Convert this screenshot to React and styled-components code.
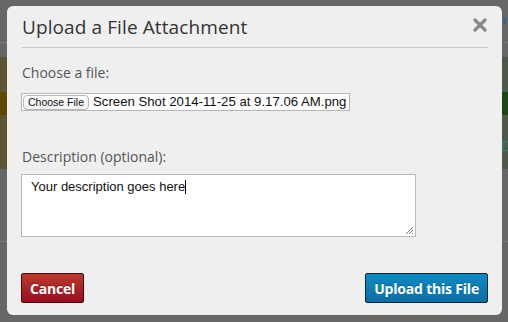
import React from 'react';
import styled, { createGlobalStyle } from 'styled-components';

const GlobalStyle = createGlobalStyle`
	html, body {
		margin: 0;
		padding: 0;
		background: #666;
		overflow: hidden;
	}
`;

const Backdrop = styled.div`
	position: relative;
	width: 508px;
	height: 322px;
	overflow: hidden;
	display: flex;
	flex-direction: column;
	background: #666;
	font-family: 'Open Sans', 'Liberation Sans', sans-serif;
`;

const Band = styled.div`
	position: relative;
	height: ${(p) => p.h}px;
	background: linear-gradient(to right, ${(p) => p.left} 50%, ${(p) => p.right} 50%);
	border-bottom: ${(p) => (p.line ? '1px solid #7a7a7a' : 'none')};
`;

const PeekText = styled.span`
	position: absolute;
	left: 502px;
	top: ${(p) => p.top}px;
	font-family: 'Open Sans', sans-serif;
	font-size: 14px;
	line-height: 14px;
	color: ${(p) => p.color};
	text-decoration: ${(p) => (p.underline ? 'underline' : 'none')};
`;

const Modal = styled.div`
	position: absolute;
	left: 7px;
	top: 6px;
	width: 495px;
	height: 309px;
	box-sizing: border-box;
	background: #efefef;
	border-radius: 6px;
	padding: 0 14px 0 15px;
	display: flex;
	flex-direction: column;
`;

const Header = styled.div`
	height: 41px;
	display: flex;
	align-items: center;
	justify-content: space-between;
	border-bottom: 1px solid #c9c9c9;
`;

const Title = styled.h3`
	margin: 0;
	padding-top: 1px;
	font-size: 19px;
	font-weight: 400;
	color: #333;
	letter-spacing: 0.1px;
`;

const Close = styled.svg`
	display: block;
	margin-right: 1px;
	margin-top: -3px;
`;

const Body = styled.div`
	flex: 1;
	display: flex;
	flex-direction: column;
	padding-top: 16px;
`;

const Label = styled.label`
	font-size: 14px;
	line-height: 18px;
	color: #555;
	margin-bottom: ${(p) => p.gap}px;
`;

const FileField = styled.div`
	width: 329px;
	height: 18px;
	box-sizing: border-box;
	margin-left: -1px;
	border: 1px solid #b5b5b5;
	background: #fff;
	display: flex;
	align-items: center;
	font-family: 'Liberation Sans', Arial, sans-serif;
	margin-bottom: 37px;
	white-space: nowrap;
	overflow: hidden;
`;

const FileButton = styled.span`
	flex-shrink: 0;
	height: 15px;
	margin-left: 1px;
	padding: 0 4px;
	box-sizing: border-box;
	border: 1px solid #b8b8b8;
	border-radius: 4px;
	background: linear-gradient(#fff, #f1f1f1);
	font-size: 10.5px;
	line-height: 13px;
	color: #111;
`;

const FileName = styled.span`
	margin-left: 4px;
	font-size: 13.2px;
	line-height: 16px;
	color: #111;
`;

const TextBox = styled.div`
	position: relative;
	width: 395px;
	height: 63px;
	box-sizing: border-box;
	margin-left: -1px;
	border: 1px solid #b8b8b8;
	background: #fff;
	padding: 4px 9px;
	font-family: 'Liberation Sans', Arial, sans-serif;
	font-size: 13px;
	line-height: 15px;
	color: #111;
`;

const Caret = styled.span`
	display: inline-block;
	width: 1px;
	height: 14px;
	background: #000;
	vertical-align: -3px;
`;

const Grip = styled.svg`
	position: absolute;
	right: 1px;
	bottom: 1px;
`;

const Footer = styled.div`
	display: flex;
	justify-content: space-between;
	align-items: center;
	height: 30px;
	margin-bottom: 12px;
	margin-left: -1px;
`;

const Button = styled.button`
	height: 30px;
	box-sizing: border-box;
	padding: 0 ${(p) => p.pad}px;
	border: 1px solid ${(p) => p.border};
	border-radius: 2px;
	background: linear-gradient(${(p) => p.top}, ${(p) => p.bottom});
	color: #fff;
	font-family: 'Open Sans', 'Liberation Sans', sans-serif;
	font-size: 14px;
	font-weight: 700;
	letter-spacing: -0.2px;
	text-shadow: 0 -1px 0 rgba(0, 0, 0, 0.25);
	cursor: pointer;
`;

export default function App() {
	return (
		<>
			<GlobalStyle />
			<Backdrop>
				<Band h={42} left="#666" right="#666" line>
					<PeekText top={14} color="#2c6488">n</PeekText>
				</Band>
				<Band h={14} left="#666" right="#666" />
				<Band h={35} left="#5f5535" right="#4d5a4a" />
				<Band h={23} left="#5d4800" right="#1d4814" />
				<Band h={55} left="#5f5535" right="#4d5a4a">
					<PeekText top={22} color="#3d7a6a" underline>
						re
					</PeekText>
				</Band>
				<Band h={72} left="#666" right="#666" line />
				<Band h={80} left="#666" right="#666" />

				<Modal>
					<Header>
						<Title>Upload a File Attachment</Title>
						<Close width="14" height="14" viewBox="0 0 14 14">
							<path d="M2 2 L12 12 M12 2 L2 12" stroke="#888" strokeWidth="3.2" strokeLinecap="round" />
						</Close>
					</Header>
					<Body>
						<Label gap={11}>Choose a file:</Label>
						<FileField>
							<FileButton>Choose File</FileButton>
							<FileName>Screen Shot 2014-11-25 at 9.17.06 AM.png</FileName>
						</FileField>
						<Label gap={8}>Description (optional):</Label>
						<TextBox>
							Your description goes here
							<Caret />
							<Grip width="9" height="9" viewBox="0 0 9 9">
								<path d="M8 1 L1 8 M8 4 L4 8 M8 7 L7 8" stroke="#777" strokeWidth="1" />
							</Grip>
						</TextBox>
					</Body>
					<Footer>
						<Button pad={8} border="#4a0a0a" top="#bb3a2c" bottom="#9b0d1f">
							Cancel
						</Button>
						<Button pad={8} border="#0f2433" top="#0e8ac6" bottom="#0a6ea4">
							Upload this File
						</Button>
					</Footer>
				</Modal>
			</Backdrop>
		</>
	);
}
